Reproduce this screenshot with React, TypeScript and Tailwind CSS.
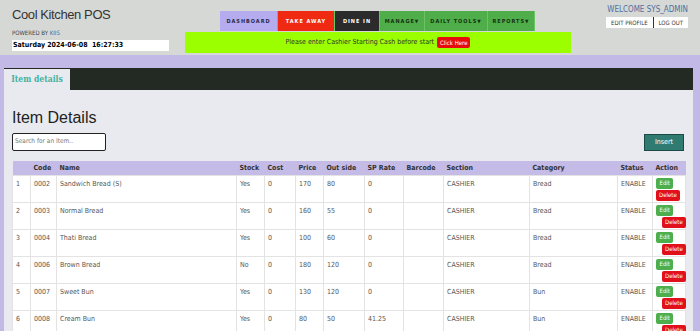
import { Fragment } from 'react'

const ROWS = [
  { n: 1, code: '0002', name: 'Sandwich Bread (S)', stock: 'Yes', cost: '0', price: '170', out: '80', sp: '0', section: 'CASHIER', cat: 'Bread' },
  { n: 2, code: '0003', name: 'Normal Bread', stock: 'Yes', cost: '0', price: '160', out: '55', sp: '0', section: 'CASHIER', cat: 'Bread' },
  { n: 3, code: '0004', name: 'Thati Bread', stock: 'Yes', cost: '0', price: '100', out: '60', sp: '0', section: 'CASHIER', cat: 'Bread' },
  { n: 4, code: '0006', name: 'Brown Bread', stock: 'No', cost: '0', price: '180', out: '120', sp: '0', section: 'CASHIER', cat: 'Bread' },
  { n: 5, code: '0007', name: 'Sweet Bun', stock: 'Yes', cost: '0', price: '130', out: '120', sp: '0', section: 'CASHIER', cat: 'Bun' },
  { n: 6, code: '0008', name: 'Cream Bun', stock: 'Yes', cost: '0', price: '80', out: '50', sp: '41.25', section: 'CASHIER', cat: 'Bun' },
]

const COLS = [
  { label: '', w: 'w-[18px]' },
  { label: 'Code', w: 'w-[26px]' },
  { label: 'Name', w: 'w-[180px]' },
  { label: 'Stock', w: 'w-[28px]' },
  { label: 'Cost', w: 'w-[31px]' },
  { label: 'Price', w: 'w-[28px]' },
  { label: 'Out side', w: 'w-[41px]' },
  { label: 'SP Rate', w: 'w-[39px]' },
  { label: 'Barcode', w: 'w-[40px]' },
  { label: 'Section', w: 'w-[86px]' },
  { label: 'Category', w: 'w-[88px]' },
  { label: 'Status', w: 'w-[35px]' },
  { label: 'Action', w: 'w-[33px]' },
]

const NAV = [
  { label: 'DASHBOARD', cls: 'bg-[#b4acee] text-[#2a2a4a] w-[58px]' },
  { label: 'TAKE AWAY', cls: 'bg-[#f02a12] text-white w-[57px]' },
  { label: 'DINE IN', cls: 'bg-[#2b2b2b] text-white w-[45px]' },
  { label: 'MANAGE', cls: 'bg-[#4fae4a] text-[#143214] w-[45px]', caret: true },
  { label: 'DAILY TOOLS', cls: 'bg-[#4fae4a] text-[#143214] w-[63px]', caret: true },
  { label: 'REPORTS', cls: 'bg-[#4fae4a] text-[#143214] w-[47px]', caret: true },
]

const cond = "font-['DejaVu_Sans_Condensed','DejaVu_Sans',Verdana,sans-serif] font-stretch-condensed"

function Header() {
  return (
    <div className="relative h-[55px] bg-[#d6d8d5]">
      <div className="absolute left-[12px] top-[7px]">
        <div className="font-['Liberation_Sans',Arial,sans-serif] text-[13px] leading-[16px] text-[#333] [letter-spacing:-0.4px]">
          Cool Kitchen POS
        </div>
        <div className="mt-[6px] text-[6px] leading-[8px] text-[#444]">
          POWERED BY <span className="text-[#3a6fb5]">KIIS</span>
        </div>
        <div className="mt-[3px] flex h-[11px] w-[157px] items-center whitespace-pre bg-white pl-[1px] text-[7px] font-bold leading-none text-black">
          Saturday 2024-06-08  16:27:33
        </div>
      </div>

      <div className="absolute left-[220px] top-[11px] flex h-[20px]">
        {NAV.map((n) => (
          <div
            key={n.label}
            className={`flex items-center justify-center whitespace-nowrap border-r border-[#6cc266] text-[5.5px] font-bold tracking-[1px] ${n.cls}`}
          >
            {n.label}
            {n.caret && <span className="text-[5px] leading-none">▼</span>}
          </div>
        ))}
      </div>

      <div className="absolute left-[185px] top-[32px] flex h-[21px] w-[386px] items-center justify-center whitespace-nowrap bg-[#9bff00] text-[7px] text-[#333]">
        Please enter Cashier Starting Cash before start
        <span className="ml-[3px] rounded-[2px] bg-[#e80d0d] px-[3px] py-[2.5px] text-[6px] leading-none text-white">
          Click Here
        </span>
      </div>

      <div className="absolute right-[12px] top-[5px] flex flex-col items-end">
        <div className="text-[8px] leading-[10px] text-[#4f6f9f]">WELCOME SYS_ADMIN</div>
        <div className="mt-[2px] flex h-[11px] bg-white text-[6px] leading-none text-[#333]">
          <span className="flex items-center border-r border-[#333] px-[5px]">EDIT PROFILE</span>
          <span className="flex items-center px-[5px]">LOG OUT</span>
        </div>
      </div>
    </div>
  )
}

function Actions({ first }: { first: boolean }) {
  return (
    <div className="flex flex-col items-start">
      <span className="rounded-[2px] bg-[#4cae4c] px-[3.5px] py-[2.5px] text-[6px] leading-none text-white">Edit</span>
      <span
        className={`mt-[1px] rounded-[2px] bg-[#e0111b] px-[3px] py-[2.5px] text-[6px] leading-none text-white ${first ? '' : 'ml-[6px]'}`}
      >
        Delete
      </span>
    </div>
  )
}

export default function App() {
  return (
    <div className={`h-[331px] w-[700px] overflow-hidden bg-[#c3b9e7] ${cond}`}>
      <Header />
      <div className="ml-[4px] mr-[7px] mt-[13px] bg-[#e8eaef]">
        <div className="flex h-[22px] bg-[#232923]">
          <div className="mt-[1px] flex h-[21px] w-[66px] items-center justify-center bg-[#e8eaef] font-['DejaVu_Serif',serif] text-[8.5px] font-bold text-[#45b2a2]">
            Item details
          </div>
        </div>

        <div className="px-[8px] pt-[19px]">
          <h1 className="font-['Liberation_Sans',Arial,sans-serif] text-[16px] leading-[18px] text-[#222]">Item Details</h1>
          <div className="mt-[6px] flex items-center justify-between">
            <div className="flex h-[18px] w-[94px] items-center rounded-[2px] border border-[#222] bg-white pl-[2px] text-[6.5px] text-[#777]">
              Search for an Item..
            </div>
            <button className="mr-[1px] h-[17px] w-[40px] border border-[#1c4b45] bg-[#2f7b71] text-[7px] text-white">
              Insert
            </button>
          </div>

          <table className="mt-[10px] w-[673px] table-fixed border-collapse text-[7px] text-[#555]">
            <thead>
              <tr className="h-[14px] bg-[#c4bbe6]">
                {COLS.map((c, i) => (
                  <th key={i} className={`${c.w} px-[3px] text-left font-bold text-[#333]`}>
                    {c.label}
                  </th>
                ))}
              </tr>
            </thead>
            <tbody>
              {ROWS.map((r, i) => (
                <Fragment key={r.n}>
                  <tr className="h-[27px] bg-white align-top">
                    {[r.n, r.code, r.name, r.stock, r.cost, r.price, r.out, r.sp, '', r.section, r.cat, 'ENABLE'].map((v, j) => (
                      <td key={j} className="border border-[#e3e3e3] px-[3px] pt-[3px]">
                        {v}
                      </td>
                    ))}
                    <td className="border border-[#e3e3e3] px-[3px] pt-[2px]">
                      <Actions first={i === 0} />
                    </td>
                  </tr>
                </Fragment>
              ))}
            </tbody>
          </table>
        </div>
      </div>
    </div>
  )
}
